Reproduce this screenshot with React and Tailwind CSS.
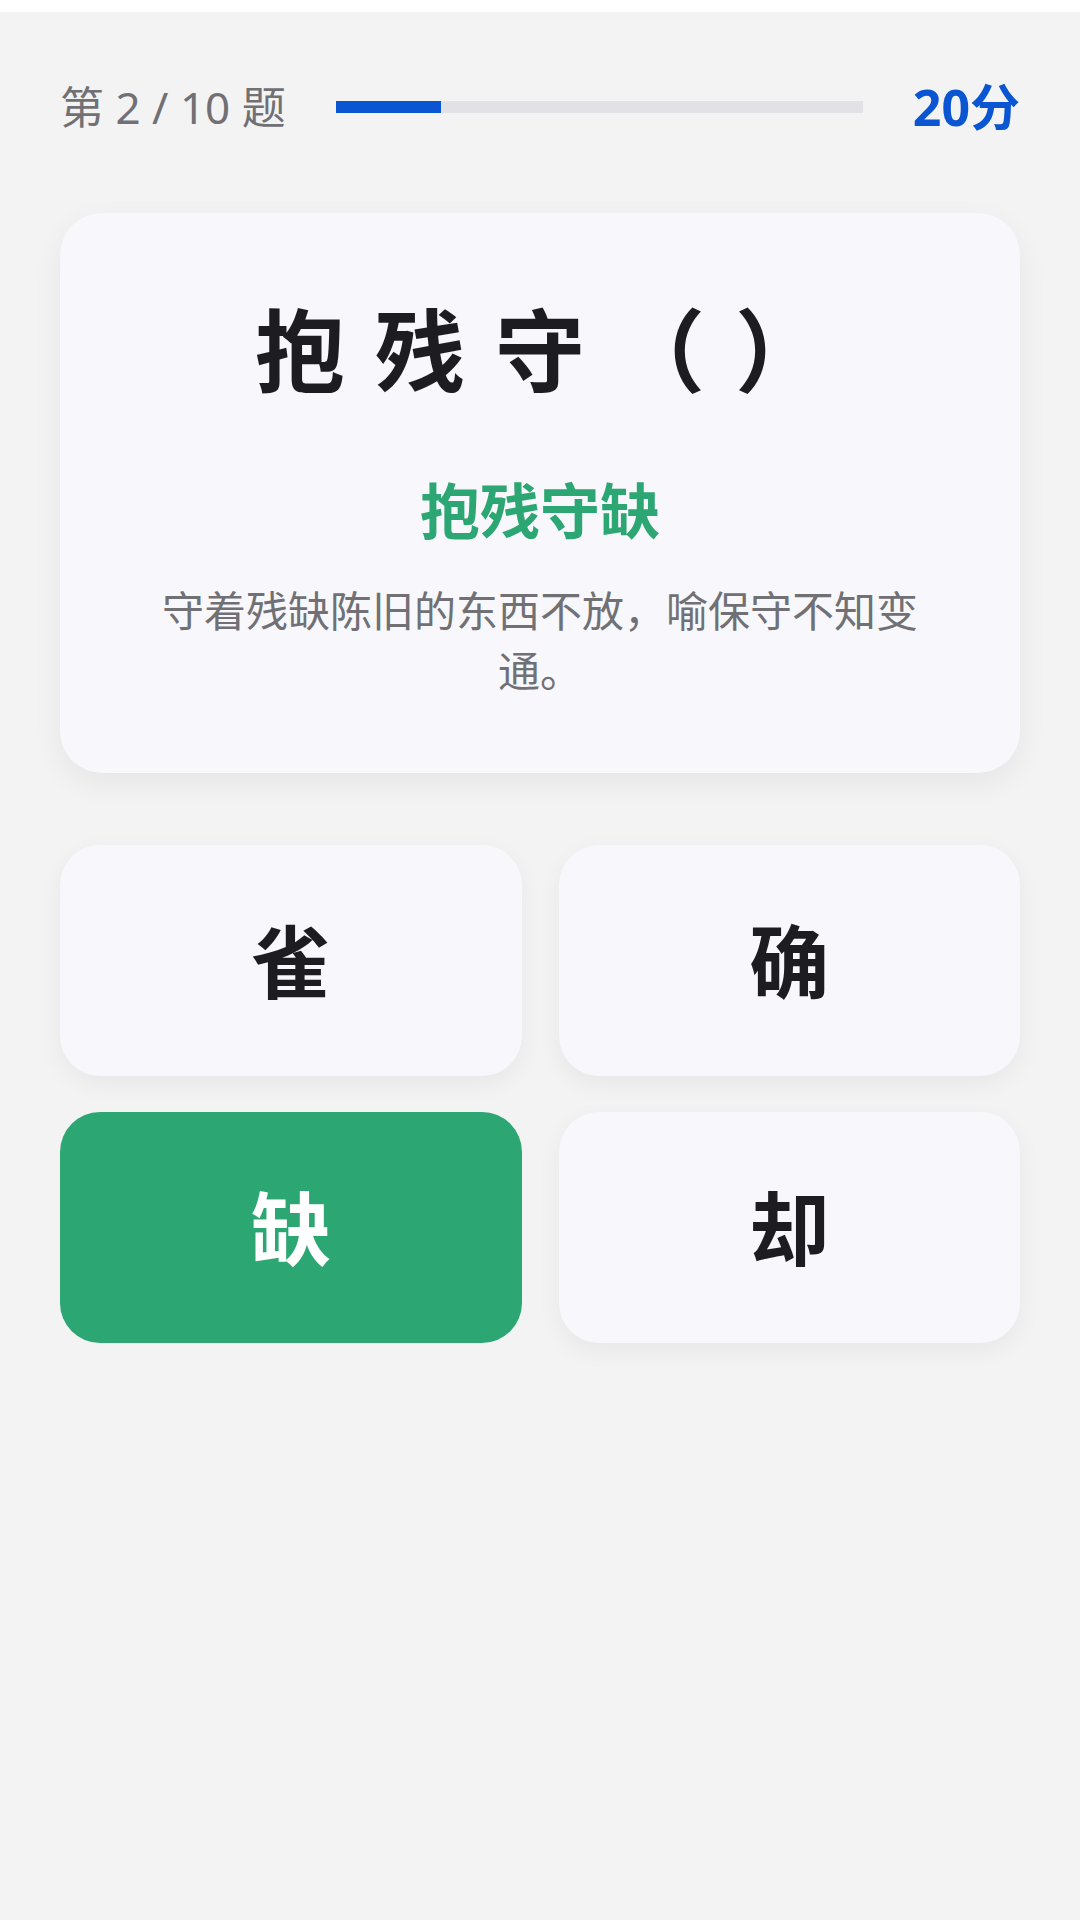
const OPTIONS = [
  { char: "雀", correct: false },
  { char: "确", correct: false },
  { char: "缺", correct: true },
  { char: "却", correct: false },
];

const FONT = {
  fontFamily: '"Noto Sans", "Noto Sans CJK SC", sans-serif',
};

const ProgressHeader = ({ current, total, score }) => {
  const pct = (current / total) * 100;

  return (
    <div className="flex items-center gap-[50px] h-[60px]">
      <div className="text-[44px] leading-none text-[#707075] whitespace-pre">
        第 {current} / {total} 题
      </div>
      <div className="flex-1 h-[12px] bg-[#e2e2e6]">
        <div className="h-full bg-[#0a55d2]" style={{ width: `${pct}%` }} />
      </div>
      <div className="text-[50px] leading-none font-bold text-[#0a55d2]">
        {score}分
      </div>
    </div>
  );
};

const QuestionCard = () => {
  return (
    <div className="mt-[76px] rounded-[42px] bg-[#f8f8fc] shadow-[0_10px_30px_rgba(0,0,0,0.06)] px-[90px] pt-[92px] pb-[72px] flex flex-col items-center">
      <div className="text-[90px] leading-none font-bold text-[#1c1c21] tracking-[30px] pl-[30px]">
        抱残守（）
      </div>
      <div className="mt-[86px] text-[60px] leading-none font-bold text-[#2ca673]">
        抱残守缺
      </div>
      <p className="mt-[40px] text-[42px] leading-[60px] text-[#707075] text-center">
        守着残缺陈旧的东西不放，喻保守不知变通。
      </p>
    </div>
  );
};

const OptionButton = ({ option }) => {
  return (
    <button
      className={
        option.correct
          ? "h-[231px] rounded-[40px] bg-[#2ca673] text-white flex items-center justify-center"
          : "h-[231px] rounded-[40px] bg-[#f8f8fc] text-[#1c1c21] shadow-[0_8px_24px_rgba(0,0,0,0.05)] flex items-center justify-center"
      }
    >
      <span className="text-[80px] leading-none font-bold">{option.char}</span>
    </button>
  );
};

export default function App() {
  return (
    <div className="min-h-[1920px] w-full bg-[#f3f3f4]" style={FONT}>
      <div className="h-[12px] bg-white" />
      <div className="px-[60px] pt-[65px]">
        <ProgressHeader current={2} total={10} score={20} />
        <QuestionCard />
        <div className="mt-[72px] grid grid-cols-2 gap-x-[37px] gap-y-[36px]">
          {OPTIONS.map((opt) => (
            <OptionButton key={opt.char} option={opt} />
          ))}
        </div>
      </div>
    </div>
  );
}
